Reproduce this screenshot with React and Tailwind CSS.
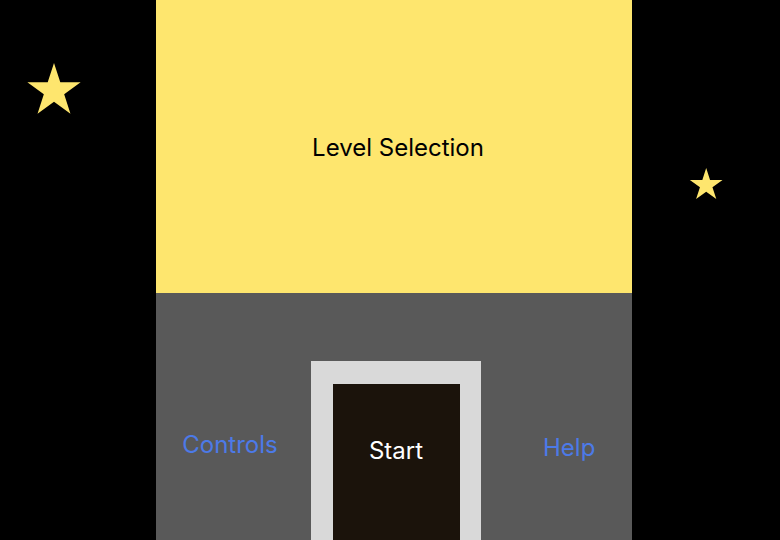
import React from "react";

function Star({ r, className }) {
  const pts = [];
  for (let i = 0; i < 10; i++) {
    const rad = i % 2 === 0 ? r : r * 0.382;
    const a = (Math.PI / 5) * i - Math.PI / 2;
    pts.push(`${(r + rad * Math.cos(a)).toFixed(2)},${(r + rad * Math.sin(a)).toFixed(2)}`);
  }
  return (
    <svg width={r * 2} height={r * 2} viewBox={`0 0 ${r * 2} ${r * 2}`} className={className}>
      <polygon points={pts.join(" ")} fill="#fee66e" />
    </svg>
  );
}

export default function App() {
  return (
    <div
      className="relative w-[780px] h-[540px] bg-black overflow-hidden flex justify-start"
      style={{ fontFamily: "Inter, 'Noto Sans', sans-serif" }}
    >
      <Star r={28} className="absolute left-[25.5px] top-[63px]" />
      <Star r={17.2} className="absolute left-[689.3px] top-[168px]" />
      <div className="ml-[156px] w-[476px] h-full flex flex-col">
        <div className="h-[293px] shrink-0 bg-[#fee66e] flex items-center justify-center pl-[8px] pt-[3px]">
          <span className="text-[24px] text-black leading-none">Level Selection</span>
        </div>
        <div className="flex-1 min-h-0 overflow-hidden bg-[#595959] flex items-start">
          <div className="w-[155px] flex justify-center">
            <span className="mt-[140px] mr-[7px] text-[24px] leading-none text-[#4c7ae8] h-fit">Controls</span>
          </div>
          <div className="w-[170px] mt-[68px] bg-[#d9d9d9] pl-[22px] pr-[21px] pt-[23px]">
            <div className="h-[200px] bg-[#1b130b] flex justify-center">
              <span className="mt-[55px] text-[24px] leading-none text-white h-fit ml-[-1px]">Start</span>
            </div>
          </div>
          <div className="w-[151px] flex justify-start">
            <span className="mt-[143px] ml-[62px] text-[24px] leading-none text-[#4c7ae8] h-fit">Help</span>
          </div>
        </div>
      </div>
    </div>
  );
}
